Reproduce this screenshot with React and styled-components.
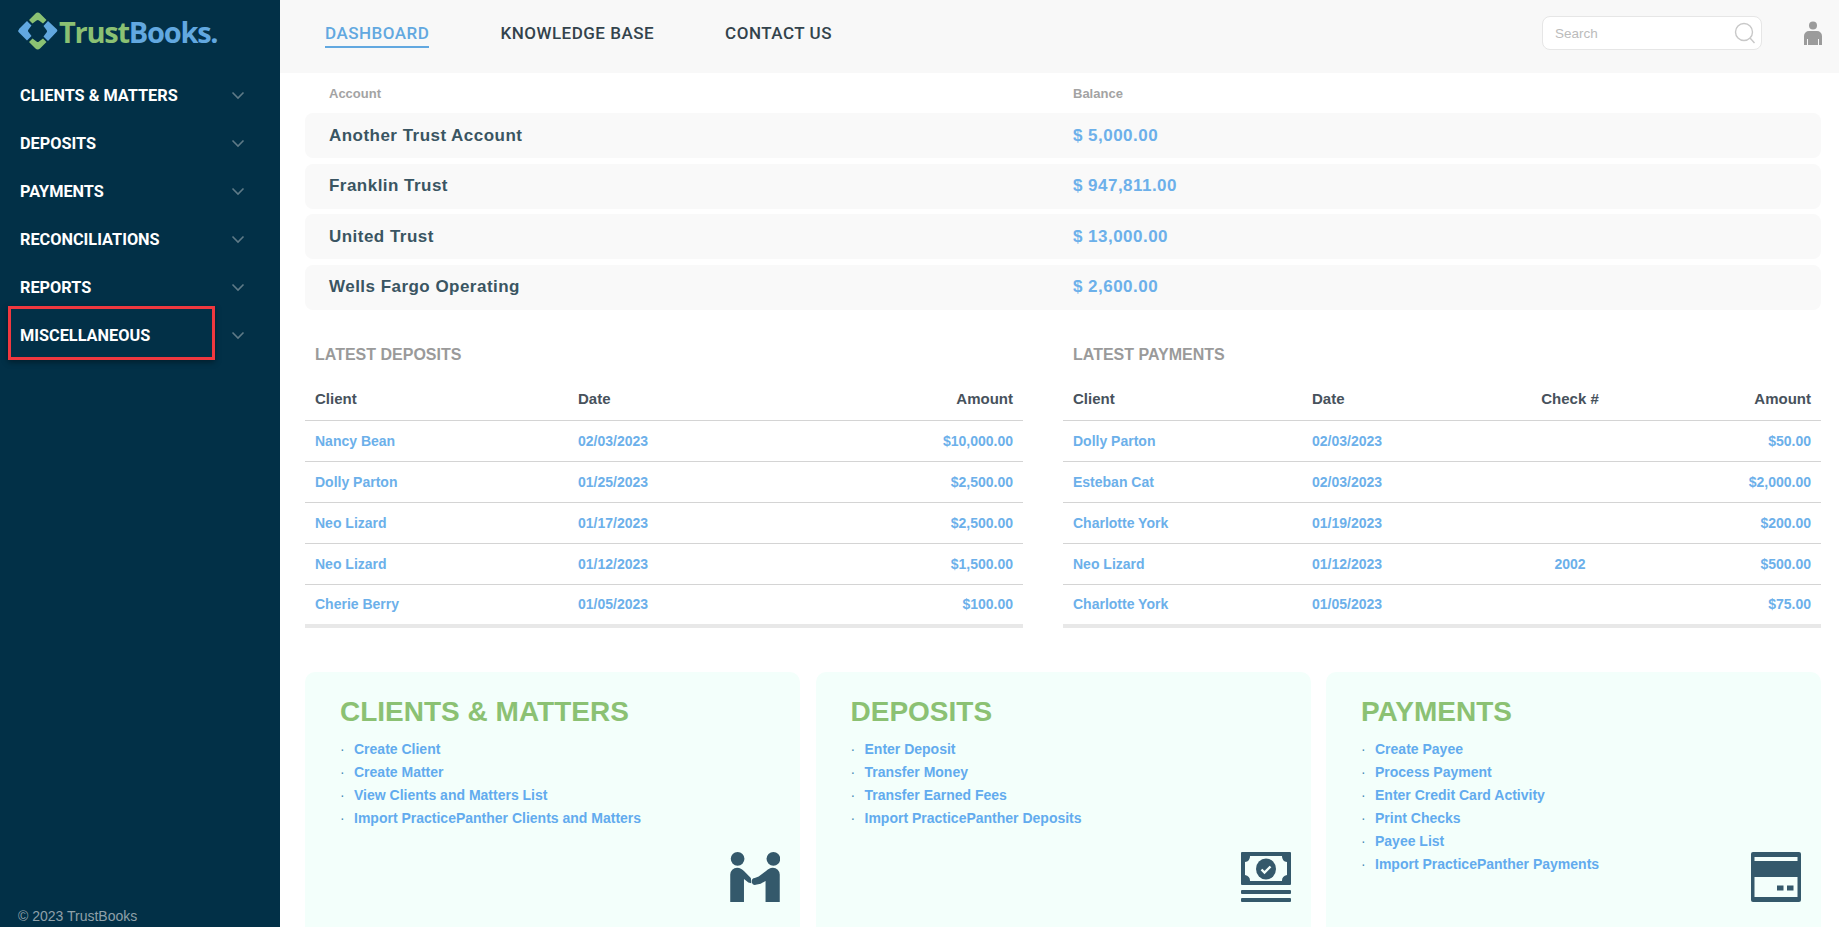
import styled, { createGlobalStyle } from "styled-components"

const GlobalStyle = createGlobalStyle`
    html, body {
        margin: 0;
        height: 100%;
        overflow: hidden;
        background: #fff;
        font-family: "Liberation Sans", Arial, sans-serif;
    }
    #root { height: 100%; }
`

const Page = styled.div`
    display: flex;
    height: 100vh;
    overflow: hidden;
`

const Sidebar = styled.aside`
    width: 280px;
    flex: none;
    background: #023047;
    display: flex;
    flex-direction: column;
`

const Logo = styled.div`
    height: 71px;
    padding: 12px 0 0 18px;
    box-sizing: border-box;
    display: flex;
    align-items: flex-start;
    gap: 1px;
`

const LogoText = styled.span`
    font-family: "Open Sans", sans-serif;
    font-size: 29px;
    font-weight: 700;
    letter-spacing: -1.25px;
    line-height: 40px;
    color: #62a8e0;
    b { color: #8bc173; font-weight: 700; }
`

const Menu = styled.nav`
    display: flex;
    flex-direction: column;
    flex: 1;
`

const MenuItem = styled.div`
    position: relative;
    height: 48px;
    padding: 0 35px 0 20px;
    display: flex;
    align-items: center;
    justify-content: space-between;
    font-family: Roboto, sans-serif;
    font-size: 16.3px;
    font-weight: 700;
    color: #fff;
`

const Highlight = styled.span`
    position: absolute;
    left: 8px;
    top: -5px;
    width: 207px;
    height: 54px;
    box-sizing: border-box;
    border: 3px solid #f0383f;
    box-shadow: 0 2px 6px rgba(0, 0, 0, 0.4);
`

const Copyright = styled.div`
    font-size: 14px;
    color: #8fa0a9;
    padding: 0 0 3px 18px;
`

const Main = styled.main`
    flex: 1;
    min-width: 0;
    display: flex;
    flex-direction: column;
`

const Topbar = styled.header`
    height: 73px;
    flex: none;
    box-sizing: border-box;
    background: #f8f8f8;
    display: flex;
    align-items: center;
    padding: 0 17px 7px 45px;
`

const TopLinks = styled.div`
    display: flex;
    gap: 71px;
    flex: 1;
    margin-top: -1px;
`

const TopLink = styled.a`
    font-family: Roboto, sans-serif;
    font-size: 17px;
    font-weight: 500;
    letter-spacing: 0.5px;
    color: ${(p) => (p.$active ? "#62a8e0" : "#33434c")};
    padding: 6px 0 3px;
    border-bottom: 2px solid ${(p) => (p.$active ? "#62a8e0" : "transparent")};
`

const SearchBox = styled.div`
    width: 220px;
    height: 34px;
    box-sizing: border-box;
    background: #fff;
    border: 1px solid #e6e6e6;
    border-radius: 8px;
    display: flex;
    align-items: center;
    justify-content: space-between;
    padding: 0 5px 0 12px;
    font-size: 13.5px;
    color: #bbb;
    margin-right: 42px;
`

const Content = styled.div`
    padding: 0 18px 0 25px;
    flex: 1;
`

const AccountHead = styled.div`
    display: grid;
    grid-template-columns: 744px 1fr;
    height: 40px;
    align-items: center;
    padding: 0 24px;
    font-size: 13px;
    font-weight: 700;
    color: #a3a3a3;
`

const AccountRow = styled.div`
    display: grid;
    grid-template-columns: 744px 1fr;
    height: 45px;
    margin-bottom: 5.5px;
    align-items: center;
    padding: 0 24px;
    background: #f9f9f9;
    border-radius: 8px;
    font-size: 17px;
    letter-spacing: 0.47px;
    font-weight: 700;
    color: #3a5562;
`

const Balance = styled.span`
    color: #6cb0ea;
`

const Tables = styled.div`
    display: grid;
    grid-template-columns: 718px 758px;
    gap: 40px;
    margin-top: 36px;
`

const SectionTitle = styled.h3`
    margin: 0 0 21px;
    padding-left: 10px;
    font-size: 16px;
    font-weight: 700;
    line-height: 18px;
    color: #9a9a9a;
`

const Table = styled.div`
    border-bottom: 4px solid #e8e8e8;
`

const TableRow = styled.div`
    display: grid;
    grid-template-columns: ${(p) => p.$cols};
    height: 41px;
    box-sizing: border-box;
    align-items: center;
    padding: 0 10px;
    border-bottom: 1px solid #d4d4d4;
    font-size: 14px;
    font-weight: 700;
    color: #6cb0ea;
    &:last-child { border-bottom: 0; height: 39px; }
`

const HeadRow = styled(TableRow)`
    height: 36px;
    padding-bottom: 7px;
    font-size: 15px;
    color: #47525c;
`

const Right = styled.span`
    text-align: right;
`

const Center = styled.span`
    text-align: center;
`

const Cards = styled.div`
    display: grid;
    grid-template-columns: repeat(3, 495px);
    justify-content: space-between;
    margin-top: 44px;
`

const Card = styled.section`
    position: relative;
    height: 270px;
    box-sizing: border-box;
    background: #f3fffb;
    border-radius: 10px 10px 0 0;
    padding: 24px 35px;
`

const CardTitle = styled.h2`
    margin: 0 0 10px;
    font-size: 28px;
    line-height: 32px;
    font-weight: 700;
    color: #8bc173;
`

const CardList = styled.ul`
    list-style: none;
    margin: 0;
    padding: 0;
`

const CardLink = styled.li`
    display: flex;
    height: 23px;
    align-items: center;
    font-size: 14px;
    font-weight: 700;
    color: #62abee;
    &::before {
        content: "·";
        color: #4b8db5;
        width: 14px;
        font-weight: 400;
    }
`

const CardIcon = styled.div`
    position: absolute;
    right: 20px;
    top: 180px;
    line-height: 0;
`

const Chevron = () => (
    <svg width="14" height="9" viewBox="0 0 14 9" fill="none" stroke="#5f7a87" strokeWidth="1.6">
        <path d="M1.5 1.5 7 7l5.5-5.5" />
    </svg>
)

const LogoMark = () => (
    <svg width="40" height="38" viewBox="0 0 40 38">
        <path fill="#8bc173" d="M17.5 1.5a3 3 0 0 1 4.500 0L28.500 8 25 11.500 21 8.500a2 2 0 0 0-2.500 0L14.500 11.500 11 8z" />
        <path fill="#8bc173" d="M11 30l3.500-3.500 4 3a2 2 0 0 0 2.500 0l4-3 3.500 3.500-6.500 6.500a3 3 0 0 1-4.500 0z" />
        <path fill="#62a8e0" d="M1 17l8-8 4.500 4.500-3 4a2 2 0 0 0 0 2.500l3 4-4.500 4.500-8-8a2 2 0 0 1 0-3z" />
        <path fill="#62a8e0" d="M30 9l8.500 8a2 2 0 0 1 0 3L30 29l-4.500-4.500 3-4a2 2 0 0 0 0-2.500l-3-4z" />
    </svg>
)

const SearchIcon = () => (
    <svg width="22" height="22" viewBox="0 0 22 22" fill="none" stroke="#c8c8c8" strokeWidth="1.4">
        <circle cx="10" cy="10" r="8.500" />
        <path d="M16 16l4.500 5" />
    </svg>
)

const UserIcon = () => (
    <svg width="18" height="25" viewBox="0 0 18 25" fill="#9b9b9b">
        <circle cx="9" cy="4.500" r="4" />
        <path d="M0 24v-9a5 5 0 0 1 5-5h8a5 5 0 0 1 5 5v9h-3v-6h-1v6H4v-6H3v6z" />
    </svg>
)

const HandshakeIcon = () => (
    <svg width="50" height="50" viewBox="0 0 50.500 51" fill="#34596b">
        <circle cx="7.500" cy="7" r="7" />
        <circle cx="44" cy="7" r="7" />
        <path d="M0 23a7 7 0 0 1 7-7c3 0 5 1.500 7 3.500l7 7 .5 5.500-3-1-4.500-3.500V51H0z" />
        <path d="M50.500 23a7 7 0 0 0-7-7c-3 0-5 1.500-7 3.500L29 25l-4 1.500a3.500 3.500 0 0 0 1 7l5-1 5-3V51h14.500z" />
    </svg>
)

const MoneyIcon = () => (
    <svg width="50" height="50" viewBox="0 0 50 50">
        <rect x="0" y="0" width="50" height="33" rx="1" fill="#34596b" />
        <path fill="#f3fffb" d="M9 4h32a6 6 0 0 0 5 6v13a6 6 0 0 0-5 6H9a6 6 0 0 0-5-6V10a6 6 0 0 0 5-6z" />
        <ellipse cx="25" cy="17" rx="10" ry="10.500" fill="#34596b" />
        <path d="M20.500 17.500l3 3 6-6" fill="none" stroke="#f3fffb" strokeWidth="2.400" />
        <rect x="0" y="38" width="50" height="4" rx="1" fill="#34596b" />
        <rect x="0" y="46" width="50" height="4" rx="1" fill="#34596b" />
    </svg>
)

const CardIconSvg = () => (
    <svg width="50" height="50" viewBox="0 0 50 50">
        <rect width="50" height="50" rx="2" fill="#34596b" />
        <rect x="3.500" y="5" width="43" height="4" fill="#f3fffb" />
        <rect x="3.500" y="25" width="43" height="20" fill="#f3fffb" />
        <rect x="26" y="33.500" width="6.500" height="5" fill="#34596b" />
        <rect x="36" y="33.500" width="6.500" height="5" fill="#34596b" />
    </svg>
)

const menu = ["CLIENTS & MATTERS", "DEPOSITS", "PAYMENTS", "RECONCILIATIONS", "REPORTS", "MISCELLANEOUS"]

const accounts = [
    ["Another Trust Account", "$ 5,000.00"],
    ["Franklin Trust", "$ 947,811.00"],
    ["United Trust", "$ 13,000.00"],
    ["Wells Fargo Operating", "$ 2,600.00"],
]

const deposits = [
    ["Nancy Bean", "02/03/2023", "$10,000.00"],
    ["Dolly Parton", "01/25/2023", "$2,500.00"],
    ["Neo Lizard", "01/17/2023", "$2,500.00"],
    ["Neo Lizard", "01/12/2023", "$1,500.00"],
    ["Cherie Berry", "01/05/2023", "$100.00"],
]

const payments = [
    ["Dolly Parton", "02/03/2023", "", "$50.00"],
    ["Esteban Cat", "02/03/2023", "", "$2,000.00"],
    ["Charlotte York", "01/19/2023", "", "$200.00"],
    ["Neo Lizard", "01/12/2023", "2002", "$500.00"],
    ["Charlotte York", "01/05/2023", "", "$75.00"],
]

const cards = [
    {
        title: "CLIENTS & MATTERS",
        icon: <HandshakeIcon />,
        links: ["Create Client", "Create Matter", "View Clients and Matters List", "Import PracticePanther Clients and Matters"],
    },
    {
        title: "DEPOSITS",
        icon: <MoneyIcon />,
        links: ["Enter Deposit", "Transfer Money", "Transfer Earned Fees", "Import PracticePanther Deposits"],
    },
    {
        title: "PAYMENTS",
        icon: <CardIconSvg />,
        links: ["Create Payee", "Process Payment", "Enter Credit Card Activity", "Print Checks", "Payee List", "Import PracticePanther Payments"],
    },
]

const depositCols = "263px 1fr 200px"
const paymentCols = "239px 214px 88px 1fr"

export default function App() {
    return (
        <>
            <GlobalStyle />
            <Page>
                <Sidebar>
                    <Logo>
                        <LogoMark />
                        <LogoText>
                            <b>Trust</b>Books.
                        </LogoText>
                    </Logo>
                    <Menu>
                        {menu.map((item) => (
                            <MenuItem key={item}>
                                {item}
                                <Chevron />
                                {item === "MISCELLANEOUS" && <Highlight />}
                            </MenuItem>
                        ))}
                    </Menu>
                    <Copyright>© 2023 TrustBooks</Copyright>
                </Sidebar>
                <Main>
                    <Topbar>
                        <TopLinks>
                            <TopLink $active>DASHBOARD</TopLink>
                            <TopLink>KNOWLEDGE BASE</TopLink>
                            <TopLink>CONTACT US</TopLink>
                        </TopLinks>
                        <SearchBox>
                            Search
                            <SearchIcon />
                        </SearchBox>
                        <UserIcon />
                    </Topbar>
                    <Content>
                        <AccountHead>
                            <span>Account</span>
                            <span>Balance</span>
                        </AccountHead>
                        {accounts.map(([name, balance]) => (
                            <AccountRow key={name}>
                                <span>{name}</span>
                                <Balance>{balance}</Balance>
                            </AccountRow>
                        ))}
                        <Tables>
                            <div>
                                <SectionTitle>LATEST DEPOSITS</SectionTitle>
                                <Table>
                                    <HeadRow $cols={depositCols}>
                                        <span>Client</span>
                                        <span>Date</span>
                                        <Right>Amount</Right>
                                    </HeadRow>
                                    {deposits.map((row) => (
                                        <TableRow key={row[0] + row[1]} $cols={depositCols}>
                                            <span>{row[0]}</span>
                                            <span>{row[1]}</span>
                                            <Right>{row[2]}</Right>
                                        </TableRow>
                                    ))}
                                </Table>
                            </div>
                            <div>
                                <SectionTitle>LATEST PAYMENTS</SectionTitle>
                                <Table>
                                    <HeadRow $cols={paymentCols}>
                                        <span>Client</span>
                                        <span>Date</span>
                                        <Center>Check #</Center>
                                        <Right>Amount</Right>
                                    </HeadRow>
                                    {payments.map((row) => (
                                        <TableRow key={row[0] + row[1]} $cols={paymentCols}>
                                            <span>{row[0]}</span>
                                            <span>{row[1]}</span>
                                            <Center>{row[2]}</Center>
                                            <Right>{row[3]}</Right>
                                        </TableRow>
                                    ))}
                                </Table>
                            </div>
                        </Tables>
                        <Cards>
                            {cards.map((card) => (
                                <Card key={card.title}>
                                    <CardTitle>{card.title}</CardTitle>
                                    <CardList>
                                        {card.links.map((link) => (
                                            <CardLink key={link}>{link}</CardLink>
                                        ))}
                                    </CardList>
                                    <CardIcon>{card.icon}</CardIcon>
                                </Card>
                            ))}
                        </Cards>
                    </Content>
                </Main>
            </Page>
        </>
    )
}
